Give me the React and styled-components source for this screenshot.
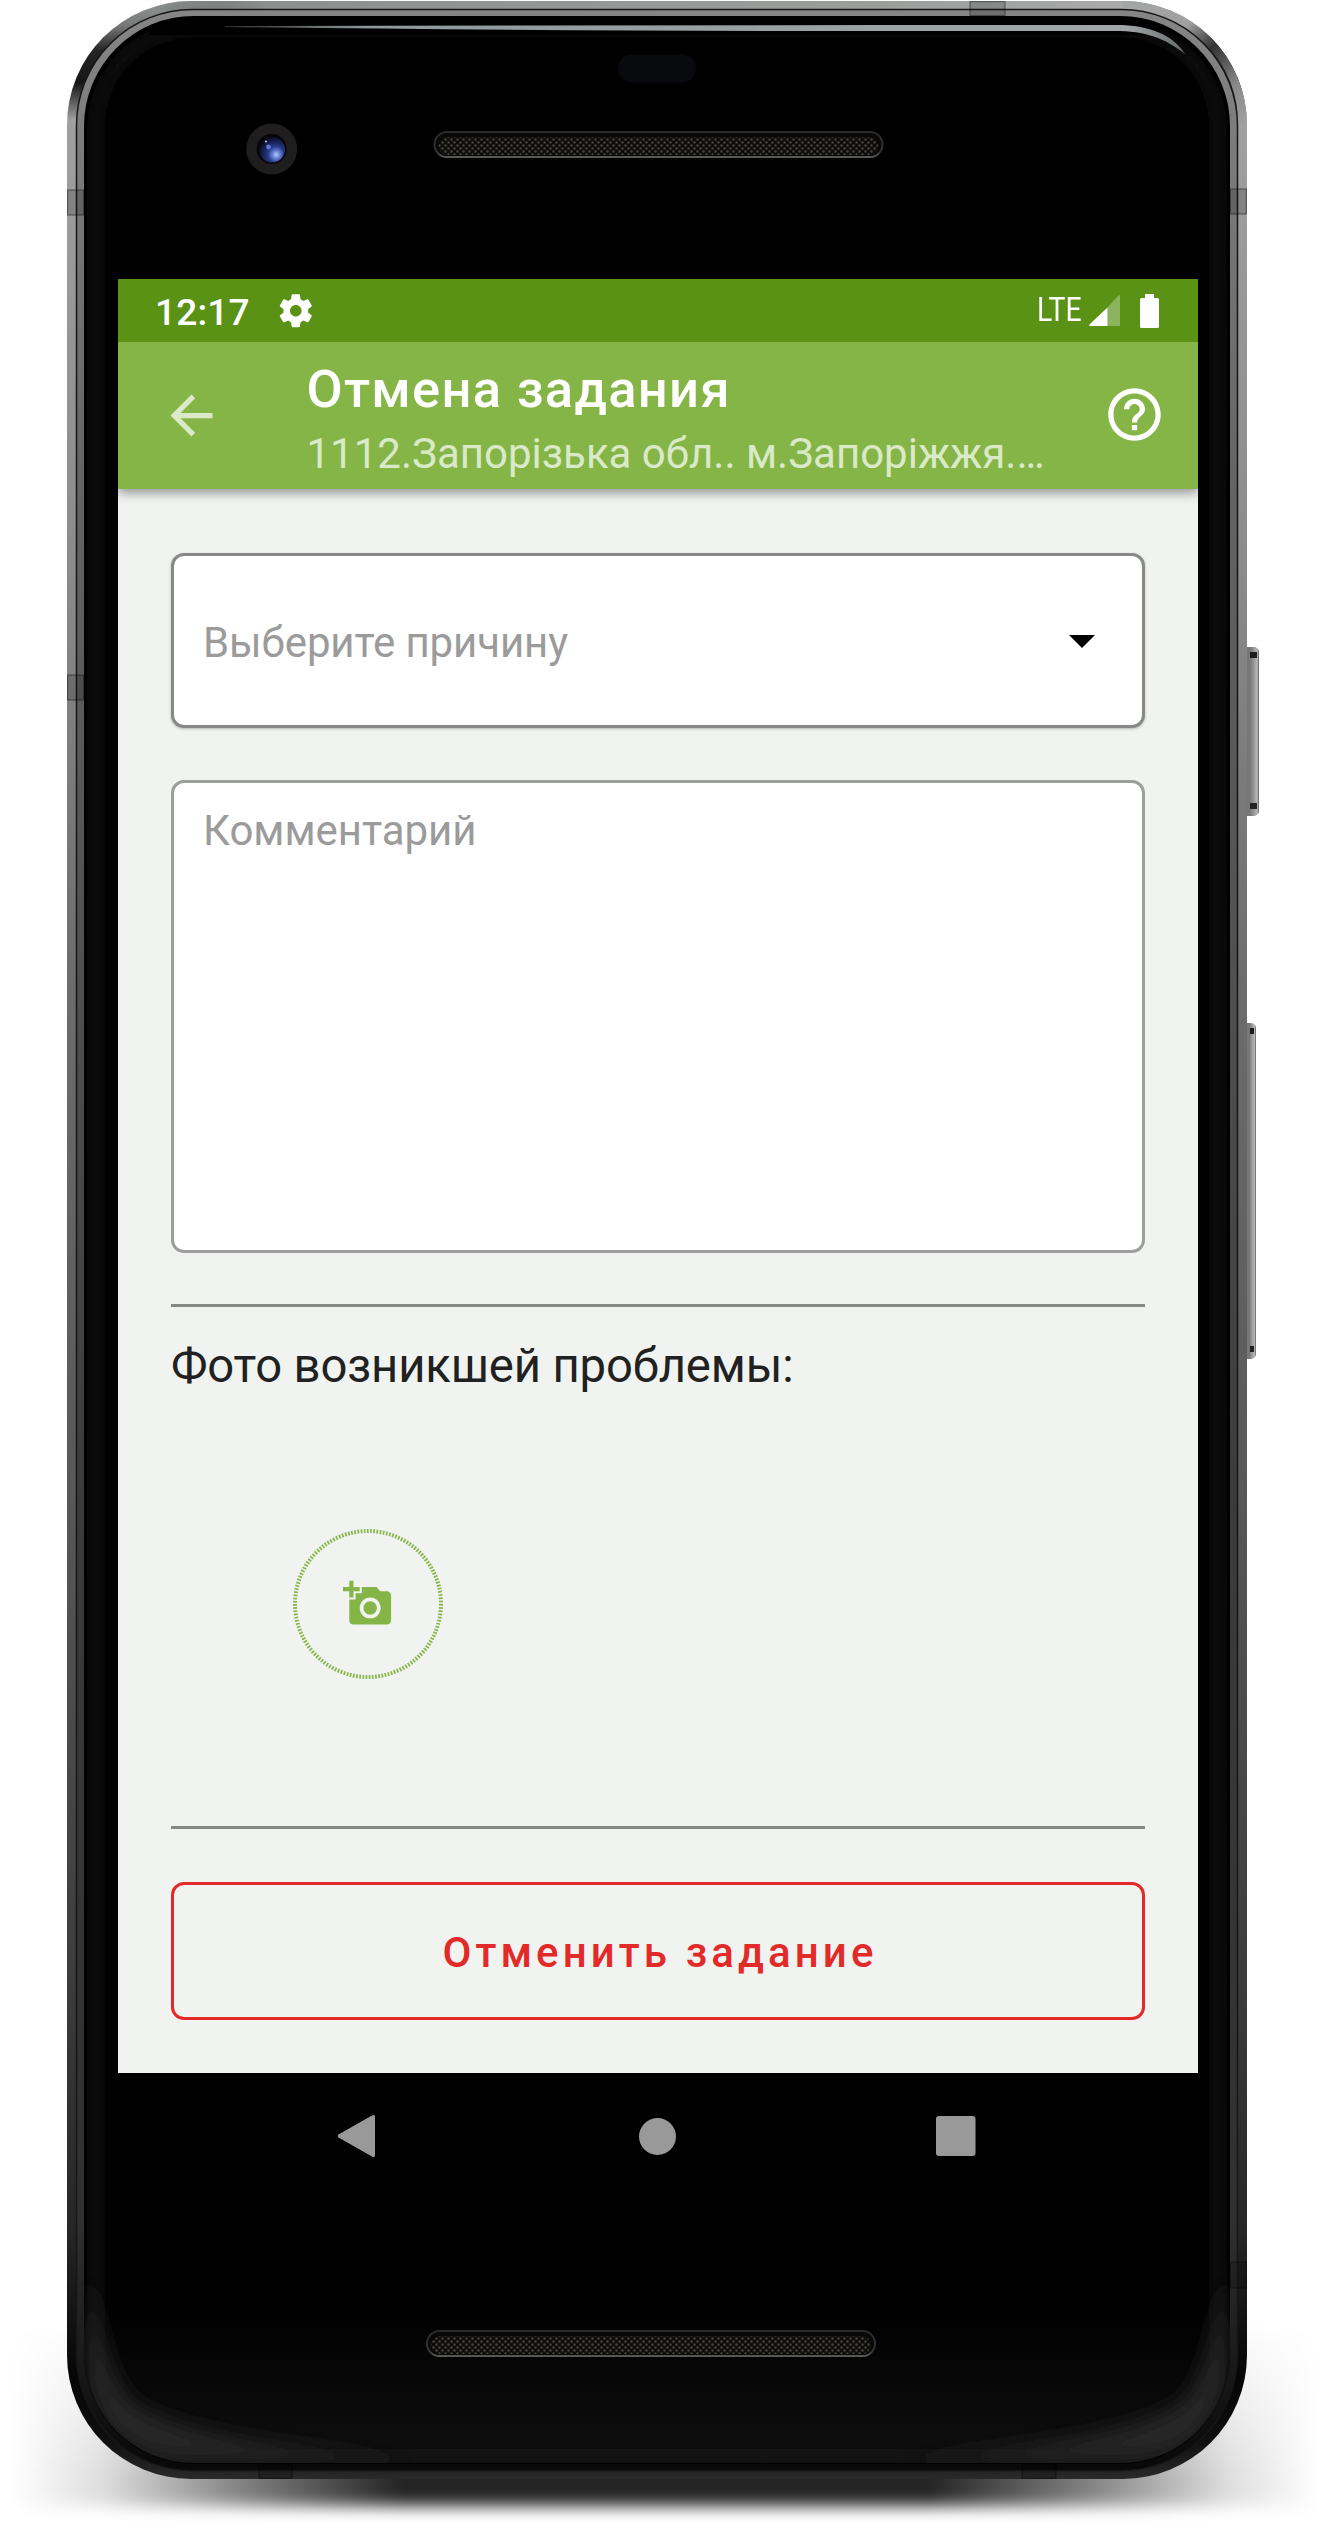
import React from "react";
import styled, { createGlobalStyle } from "styled-components";

const GlobalStyle = createGlobalStyle`
  * { box-sizing: border-box; }
  body { margin: 0; background: #fff; font-family: Roboto, "Noto Sans", sans-serif; }
  button, textarea { font: inherit; }
`;

const Device = styled.div`
  position: relative;
  width: 1330px;
  height: 2532px;
  padding: 279px 132px 0 118px;
  overflow: hidden;
`;

const Chassis = styled.svg`
  position: absolute;
  inset: 0;
  width: 1330px;
  height: 2532px;
`;

const Screen = styled.main`
  position: relative;
  width: 1080px;
  height: 1920px;
  display: flex;
  flex-direction: column;
  background: #f0f3f0;
`;

const StatusBar = styled.div`
  height: 63px;
  flex: none;
  display: flex;
  align-items: center;
  justify-content: space-between;
  padding: 0 39px 0 37px;
  background: #5a9216;
  color: #fff;
`;

const StatusGroup = styled.div`
  display: flex;
  align-items: center;
  gap: ${(p) => p.$gap}px;
`;

const Clock = styled.span`
  padding-top: 4px;
  font-size: 37px;
  font-weight: 500;
  letter-spacing: 0.16px;
`;

const Network = styled.span`
  width: 44px;
  padding-bottom: 2px;
  font-size: 33px;
  transform: scaleX(0.86);
  transform-origin: left center;
`;

const SignalIcon = styled.svg`
  margin: 0 12px 0 0;
`;

const AppBar = styled.header`
  position: relative;
  z-index: 1;
  height: 147px;
  flex: none;
  display: flex;
  align-items: center;
  padding: 0 32px 0 42px;
  background: #85b546;
  box-shadow: 0 4px 10px rgba(0, 0, 0, 0.38);
  clip-path: inset(0 0 -24px 0);
`;

const IconButton = styled.button`
  flex: none;
  display: flex;
  padding: 0 0 ${(p) => p.$lift || 0}px;
  border: 0;
  background: none;
  color: ${(p) => p.$color};
`;

const Titles = styled.div`
  flex: 1;
  display: flex;
  flex-direction: column;
  gap: 10px;
  margin-left: 83.5px;
  padding-top: 7px;
`;

const Title = styled.h1`
  margin: 0;
  font-size: 52.5px;
  line-height: 60px;
  font-weight: 500;
  letter-spacing: 1.3px;
  color: #fff;
`;

const Subtitle = styled.div`
  font-size: 42px;
  line-height: 50px;
  white-space: nowrap;
  color: #dae9c8;
`;

const Form = styled.section`
  flex: none;
  height: 1584px;
  display: flex;
  flex-direction: column;
  padding: 64px 53px 53px;
`;

const Select = styled.div`
  flex: none;
  height: 175px;
  display: flex;
  align-items: center;
  justify-content: space-between;
  padding: 4px 47px 0 29px;
  border: 3px solid #888;
  border-radius: 13px;
  background: #fff;
  box-shadow: 0 1px 3px rgba(0, 0, 0, 0.25);
  font-size: 42px;
  letter-spacing: -0.1px;
  color: #9b9b9b;
`;

const Comment = styled.textarea`
  display: block;
  flex: none;
  height: 473px;
  margin: 52px 0 51px;
  padding: 22.5px 29px;
  border: 3px solid #9e9e9e;
  border-radius: 13px;
  background: #fff;
  resize: none;
  outline: none;
  font-size: 42px;
  line-height: 50px;
  letter-spacing: -0.05px;
  &::placeholder { color: #9b9b9b; opacity: 1; }
`;

const Caret = styled.svg`
  margin-bottom: 2px;
`;

const Divider = styled.hr`
  flex: none;
  width: 100%;
  height: 3px;
  margin: 0;
  border: 0;
  background: #888;
`;

const SectionTitle = styled.h2`
  margin: 31px 0 0;
  font-size: 47.25px;
  line-height: 56px;
  font-weight: 400;
  letter-spacing: -0.15px;
  color: #212121;
`;

const PhotoArea = styled.div`
  flex: 1;
  padding: 135px 0 0 122px;
`;

const AddPhoto = styled.button`
  display: block;
  padding: 0;
  border: 0;
  background: none;
`;

const CancelButton = styled.button`
  flex: none;
  height: 138px;
  margin-top: 53px;
  padding: 3px 0 0 4px;
  border: 3px solid #e22a28;
  border-radius: 13px;
  background: none;
  font-size: 42px;
  font-weight: 500;
  letter-spacing: 4.1px;
  color: #e22a28;
`;

const NavBar = styled.nav`
  flex: none;
  height: 126px;
  display: flex;
  align-items: center;
  padding-left: 219px;
  background: #000;
`;

const NavIcon = styled.svg`
  margin-right: ${(p) => p.$after}px;
  fill: #999;
`;

const MaterialIcon = ({ size, d }) => (
  <svg width={size} height={size} viewBox="0 0 24 24" fill="currentColor">
    <path d={d} />
  </svg>
);

const SETTINGS =
  "M19.43 12.98c.04-.32.07-.64.07-.98s-.03-.66-.07-.98l2.11-1.65c.19-.15.24-.42.12-.64l-2-3.46c-.12-.22-.39-.3-.61-.22l-2.49 1c-.52-.4-1.08-.73-1.69-.98l-.38-2.65C14.46 2.18 14.25 2 14 2h-4c-.25 0-.46.18-.49.42l-.38 2.65c-.61.25-1.17.59-1.69.98l-2.49-1c-.23-.09-.49 0-.61.22l-2 3.46c-.13.22-.07.49.12.64l2.11 1.65c-.04.32-.07.65-.07.98s.03.66.07.98l-2.11 1.65c-.19.15-.24.42-.12.64l2 3.46c.12.22.39.3.61.22l2.49-1c.52.4 1.08.73 1.69.98l.38 2.65c.03.24.24.42.49.42h4c.25 0 .46-.18.49-.42l.38-2.65c.61-.25 1.17-.59 1.69-.98l2.49 1c.23.09.49 0 .61-.22l2-3.46c.12-.22.07-.49-.12-.64l-2.11-1.65zM12 15.5c-1.93 0-3.5-1.57-3.5-3.5s1.57-3.5 3.5-3.5 3.5 1.57 3.5 3.5-1.57 3.5-3.5 3.5z";
const BACK = "M20 11H7.83l5.59-5.59L12 4l-8 8 8 8 1.41-1.41L7.83 13H20v-2z";
const HELP =
  "M11 18h2v-2h-2v2zm1-16C6.48 2 2 6.48 2 12s4.48 10 10 10 10-4.48 10-10S17.52 2 12 2zm0 18c-4.41 0-8-3.59-8-8s3.59-8 8-8 8 3.59 8 8-3.59 8-8 8zm0-14c-2.21 0-4 1.79-4 4h2c0-1.1.9-2 2-2s2 .9 2 2c0 2-3 1.75-3 5h2c0-2.25 3-2.5 3-5 0-2.21-1.79-4-4-4z";
const ADD_PHOTO =
  "M3 4V1h2v3h3v2H5v3H3V6H0V4h3zm3 6V7h3V4h7l1.83 2H21c1.1 0 2 .9 2 2v12c0 1.1-.9 2-2 2H5c-1.1 0-2-.9-2-2V10h3zm7 9c2.76 0 5-2.24 5-5s-2.24-5-5-5-5 2.24-5 5 2.24 5 5 5zm-3.2-5c0 1.77 1.43 3.2 3.2 3.2s3.2-1.43 3.2-3.2-1.43-3.2-3.2-3.2-3.2 1.43-3.2 3.2z";

function Speaker({ x, y }) {
  return (
    <g>
      <rect x={x + 1} y={y + 1} width="448" height="25" rx="12.5" fill="#080808" stroke="url(#speakerRim)" strokeWidth="2" />
      <rect x={x + 5} y={y + 6} width="440" height="18" rx="9" fill="url(#mesh)" />
    </g>
  );
}

function SideButton({ y, width, height }) {
  return (
    <g>
      <rect x="1242" y={y} width={width + 5} height={height} rx="5" fill="url(#buttonFace)" />
      <rect x="1247" y={y} width="3" height={height} fill="#777" />
      <rect x="1250" y={y + 5} width={width - 5} height="6" fill="#1c1c1c" />
      <rect x="1250" y={y + height - 13} width={width - 5} height="6" fill="#222" />
    </g>
  );
}

function PhoneBody() {
  return (
    <Chassis viewBox="0 0 1330 2532" aria-hidden="true">
      <defs>
        <linearGradient id="metal" x1="0" y1="0" x2="0" y2="1">
          <stop offset="0" stopColor="#929895" />
          <stop offset="0.01" stopColor="#777" />
          <stop offset="0.02" stopColor="#242424" />
          <stop offset="0.033" stopColor="#151515" />
          <stop offset="0.048" stopColor="#a0a0a0" />
          <stop offset="0.22" stopColor="#8c8c8c" />
          <stop offset="0.4" stopColor="#6c6c6c" />
          <stop offset="0.6" stopColor="#585858" />
          <stop offset="0.8" stopColor="#3c3c3c" />
          <stop offset="0.9" stopColor="#262626" />
          <stop offset="0.96" stopColor="#050505" />
          <stop offset="0.985" stopColor="#101010" />
          <stop offset="1" stopColor="#2a2a2a" />
        </linearGradient>
        <linearGradient id="bevel" x1="0" y1="0" x2="0" y2="1">
          <stop offset="0" stopColor="#858585" />
          <stop offset="0.2" stopColor="#636363" />
          <stop offset="0.6" stopColor="#3c3c3c" />
          <stop offset="0.9" stopColor="#303030" />
          <stop offset="1" stopColor="#080808" />
        </linearGradient>
        <linearGradient id="topBand" x1="0" y1="0" x2="1" y2="0">
          <stop offset="0" stopColor="#555" stopOpacity="0" />
          <stop offset="0.12" stopColor="#8d8f8e" />
          <stop offset="0.75" stopColor="#9a9f9c" />
          <stop offset="1" stopColor="#aaa" />
        </linearGradient>
        <linearGradient id="cornerLight" x1="0" y1="0" x2="1" y2="1">
          <stop offset="0" stopColor="#a4a6a5" />
          <stop offset="0.35" stopColor="#a0a0a0" />
          <stop offset="0.55" stopColor="#333" />
          <stop offset="0.8" stopColor="#888" />
          <stop offset="1" stopColor="#a0a0a0" />
        </linearGradient>
        <linearGradient id="bottomGlow" x1="0" y1="0" x2="0" y2="1">
          <stop offset="0" stopColor="#000" />
          <stop offset="1" stopColor="#0f0f0f" />
        </linearGradient>
        <linearGradient id="highlight" x1="0" y1="0" x2="1" y2="0">
          <stop offset="0" stopColor="#8f9a9a" stopOpacity="0.3" />
          <stop offset="0.15" stopColor="#8f9a9a" />
          <stop offset="0.94" stopColor="#a0a6a6" />
          <stop offset="1" stopColor="#666c6c" />
        </linearGradient>
        <linearGradient id="buttonFace" x1="0" y1="0" x2="1" y2="0">
          <stop offset="0.3" stopColor="#666" />
          <stop offset="0.6" stopColor="#888" />
          <stop offset="0.9" stopColor="#b8b8b8" />
          <stop offset="1" stopColor="#555" />
        </linearGradient>
        <linearGradient id="speakerRim" x1="0" y1="0" x2="0" y2="1">
          <stop offset="0" stopColor="#2a2a2a" />
          <stop offset="0.8" stopColor="#333" />
          <stop offset="1" stopColor="#5a5a55" />
        </linearGradient>
        <linearGradient id="floor" x1="0" y1="0" x2="1" y2="0">
          <stop offset="0" stopColor="#000" stopOpacity="0" />
          <stop offset="0.07" stopColor="#000" stopOpacity="0.13" />
          <stop offset="0.18" stopColor="#000" stopOpacity="0.5" />
          <stop offset="0.3" stopColor="#000" stopOpacity="0.86" />
          <stop offset="0.7" stopColor="#000" stopOpacity="0.86" />
          <stop offset="0.82" stopColor="#000" stopOpacity="0.5" />
          <stop offset="0.93" stopColor="#000" stopOpacity="0.13" />
          <stop offset="1" stopColor="#000" stopOpacity="0" />
        </linearGradient>
        <linearGradient id="fadeDown" x1="0" y1="0" x2="0" y2="1">
          <stop offset="0" stopColor="#fff" stopOpacity="0" />
          <stop offset="0.75" stopColor="#fff" />
          <stop offset="1" stopColor="#fff" />
        </linearGradient>
        <mask id="floorMask">
          <rect x="0" y="2310" width="1330" height="222" fill="url(#fadeDown)" />
        </mask>
        <filter id="soften" x="-10%" y="-20%" width="120%" height="140%">
          <feGaussianBlur stdDeviation="2 8" />
        </filter>
        <filter id="glow" x="-20%" y="-20%" width="140%" height="140%">
          <feGaussianBlur stdDeviation="6" />
        </filter>
        <filter id="wideGlow" x="-30%" y="-30%" width="160%" height="160%">
          <feGaussianBlur stdDeviation="10" />
        </filter>
        <clipPath id="glassClip">
          <rect x="84" y="17" width="1146" height="2446" rx="110" />
        </clipPath>
        <clipPath id="frameClip">
          <rect x="67" y="1" width="1180" height="2478" rx="124" />
        </clipPath>
        <radialGradient id="lens" cx="0.66" cy="0.7" r="0.7">
          <stop offset="0" stopColor="#b8c8fa" />
          <stop offset="0.2" stopColor="#6b83d8" />
          <stop offset="0.45" stopColor="#263b88" />
          <stop offset="0.8" stopColor="#131b45" />
          <stop offset="1" stopColor="#070a18" />
        </radialGradient>
        <pattern id="mesh" width="6" height="6" patternUnits="userSpaceOnUse">
          <rect width="6" height="6" fill="#0d0d0c" />
          <rect x="0.5" y="0.5" width="2" height="2" fill="#554f47" />
          <rect x="3.5" y="3.5" width="2" height="2" fill="#554f47" />
        </pattern>
      </defs>

      <g mask="url(#floorMask)">
        <rect x="10" y="2330" width="1310" height="176" fill="url(#floor)" filter="url(#soften)" />
      </g>

      <SideButton y={647} width={12} height={169} />
      <SideButton y={1023} width={9} height={336} />

      <rect x="67" y="1" width="1180" height="2478" rx="124" fill="url(#metal)" />
      <g clipPath="url(#frameClip)">
        <rect x="150" y="1" width="973" height="9" fill="url(#topBand)" />
        <path d="M1123 5A120 120 0 0 1 1243 125" fill="none" stroke="url(#cornerLight)" strokeWidth="9" />
      </g>
      <rect x="76.5" y="9.5" width="1161" height="2461" rx="116" fill="url(#bevel)" stroke="#161616" strokeWidth="1.5" />
      <rect x="84" y="16" width="1146" height="2448" rx="110" fill="#000" />
      <g clipPath="url(#glassClip)">
        <rect x="84" y="2300" width="1146" height="164" fill="url(#bottomGlow)" />
        <rect x="96" y="28" width="1122" height="2430" rx="100" fill="none" stroke="#1d1d1d" strokeWidth="7" filter="url(#glow)" />
        <path d="M88 2270V2354Q88 2460 194 2460H420Q150 2440 122 2390Q100 2350 88 2270Z" fill="#272727" filter="url(#wideGlow)" />
        <path d="M1226 2270V2354Q1226 2460 1120 2460H894Q1164 2440 1192 2390Q1214 2350 1226 2270Z" fill="#272727" filter="url(#wideGlow)" />
        <rect x="150" y="17" width="1010" height="18" fill="#000" />
      </g>
      <path d="M225 26 L880 25 H1116 C1150 25 1173 35 1185 54 C1165 38 1145 31 1115 31 H880 Q540 31 225 27Z" fill="url(#highlight)" />

      <g fill="#000" fillOpacity="0.16" stroke="#000" strokeOpacity="0.4" strokeWidth="1.2">
        <rect x="67.6" y="190" width="16" height="25" />
        <rect x="67.6" y="675" width="16" height="25" />
        <rect x="1230.4" y="189" width="16" height="25" />
        <rect x="1230.4" y="2262" width="16" height="26" />
        <rect x="970" y="1.6" width="35" height="14" />
        <rect x="259" y="2464" width="33" height="14.4" />
        <rect x="1022" y="2464" width="34" height="14.4" />
      </g>

      <rect x="618" y="54.5" width="78" height="28" rx="14" fill="#090a0e" />
      <circle cx="271.7" cy="149" r="25.5" fill="#1f1d1e" />
      <circle cx="271.7" cy="149" r="15" fill="#050508" />
      <circle cx="272" cy="149.5" r="13" fill="url(#lens)" />
      <circle cx="268.5" cy="147" r="2.4" fill="#5c78cf" />
      <circle cx="266" cy="141.5" r="1" fill="#cfd8ff" />
      <Speaker x={433.5} y={131} />
      <Speaker x={426} y={2330} />
    </Chassis>
  );
}

export default function App() {
  return (
    <>
      <GlobalStyle />
      <Device>
        <PhoneBody />
        <Screen>
          <StatusBar>
            <StatusGroup $gap={26.5}>
              <Clock>12:17</Clock>
              <MaterialIcon size={39.6} d={SETTINGS} />
            </StatusGroup>
            <StatusGroup $gap={7.6}>
              <Network>LTE</Network>
              <SignalIcon width="31.5" height="31" viewBox="0 0 31.5 31">
                <path d="M18.5 12.5 29.5 .6Q31.5 -.6 31.5 2V29Q31.5 31 29.5 31H18.5Z" fill="#8cb35d" />
                <path d="M18.5 12.5V31H1.5Q-.8 31 .7 29.2Z" fill="#fff" />
              </SignalIcon>
              <svg width="19" height="34" viewBox="0 0 19 34" fill="#fff">
                <path d="M5 0H14V4H17.5Q19 4 19 5.5V32.5Q19 34 17.5 34H1.5Q0 34 0 32.5V5.5Q0 4 1.5 4H5Z" />
              </svg>
            </StatusGroup>
          </StatusBar>

          <AppBar>
            <IconButton $color="#dae9c8" aria-label="Назад">
              <MaterialIcon size={63} d={BACK} />
            </IconButton>
            <Titles>
              <Title>Отмена задания</Title>
              <Subtitle>1112.Запорізька обл.. м.Запоріжжя.…</Subtitle>
            </Titles>
            <IconButton $color="#fff" $lift={2} aria-label="Помощь">
              <MaterialIcon size={63} d={HELP} />
            </IconButton>
          </AppBar>

          <Form>
            <Select>
              Выберите причину
              <Caret width="26" height="13" viewBox="0 0 26 13">
                <path d="M0 0H26L13 13Z" fill="#000" />
              </Caret>
            </Select>
            <Comment placeholder="Комментарий" />
            <Divider />
            <SectionTitle>Фото возникшей проблемы:</SectionTitle>
            <PhotoArea>
              <AddPhoto aria-label="Добавить фото">
                <svg width="150" height="150" viewBox="0 0 150 150">
                  <circle cx="75" cy="75" r="73" fill="none" stroke="#85b546" strokeWidth="4" strokeDasharray="1.7 1.5" />
                  <svg x="50" y="49.6" width="50.2" height="50.2" viewBox="0 0 24 24">
                    <path d={ADD_PHOTO} fill="#85b546" />
                  </svg>
                </svg>
              </AddPhoto>
            </PhotoArea>
            <Divider />
            <CancelButton>Отменить задание</CancelButton>
          </Form>

          <NavBar>
            <NavIcon $after={264} width="38" height="42" viewBox="0 0 38 42">
              <path d="M35 .6Q38 -1 38 2V40Q38 43 35 41.4L1.5 22.5Q0 21 1.5 19.5Z" />
            </NavIcon>
            <NavIcon $after={260} width="37" height="37" viewBox="0 0 37 37">
              <circle cx="18.5" cy="18.5" r="18.5" />
            </NavIcon>
            <NavIcon $after={0} width="39.5" height="40" viewBox="0 0 39.5 40">
              <rect width="39.5" height="40" rx="3" />
            </NavIcon>
          </NavBar>
        </Screen>
      </Device>
    </>
  );
}
